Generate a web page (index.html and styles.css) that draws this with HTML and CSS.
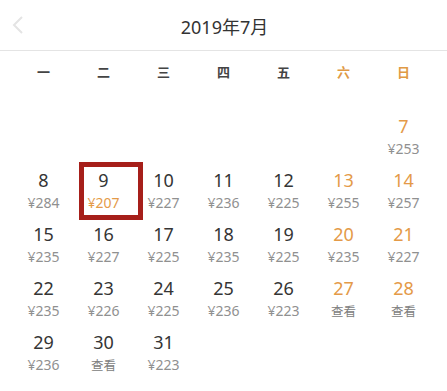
FILE: index.html
```html
<!DOCTYPE html>
<html lang="zh">
<head>
<meta charset="utf-8">
<link rel="stylesheet" href="styles.css">
</head>
<body>
<div class="header">
  <span class="back"><svg width="12" height="18" viewBox="0 0 12 18"><path d="M10 1 L2 9 L10 17" fill="none" stroke="#e4e4e4" stroke-width="2"/></svg></span>
  <span class="title">2019年7月</span>
</div>
<div class="weekdays">
  <span>一</span><span>二</span><span>三</span><span>四</span><span>五</span><span class="we">六</span><span class="we">日</span>
</div>
<div class="grid">
  <div class="cell"></div><div class="cell"></div><div class="cell"></div><div class="cell"></div><div class="cell"></div><div class="cell"></div>
  <div class="cell we"><div class="num">7</div><div class="price">¥253</div></div>

  <div class="cell"><div class="num">8</div><div class="price">¥284</div></div>
  <div class="cell sel"><div class="num">9</div><div class="price">¥207</div><span class="box"></span></div>
  <div class="cell"><div class="num">10</div><div class="price">¥227</div></div>
  <div class="cell"><div class="num">11</div><div class="price">¥236</div></div>
  <div class="cell"><div class="num">12</div><div class="price">¥225</div></div>
  <div class="cell we"><div class="num">13</div><div class="price">¥255</div></div>
  <div class="cell we"><div class="num">14</div><div class="price">¥257</div></div>

  <div class="cell"><div class="num">15</div><div class="price">¥235</div></div>
  <div class="cell"><div class="num">16</div><div class="price">¥227</div></div>
  <div class="cell"><div class="num">17</div><div class="price">¥225</div></div>
  <div class="cell"><div class="num">18</div><div class="price">¥235</div></div>
  <div class="cell"><div class="num">19</div><div class="price">¥225</div></div>
  <div class="cell we"><div class="num">20</div><div class="price">¥235</div></div>
  <div class="cell we"><div class="num">21</div><div class="price">¥227</div></div>

  <div class="cell"><div class="num">22</div><div class="price">¥235</div></div>
  <div class="cell"><div class="num">23</div><div class="price">¥226</div></div>
  <div class="cell"><div class="num">24</div><div class="price">¥225</div></div>
  <div class="cell"><div class="num">25</div><div class="price">¥236</div></div>
  <div class="cell"><div class="num">26</div><div class="price">¥223</div></div>
  <div class="cell we"><div class="num">27</div><div class="price"><span class="look">查看</span></div></div>
  <div class="cell we"><div class="num">28</div><div class="price"><span class="look">查看</span></div></div>

  <div class="cell"><div class="num">29</div><div class="price">¥236</div></div>
  <div class="cell"><div class="num">30</div><div class="price"><span class="look">查看</span></div></div>
  <div class="cell"><div class="num">31</div><div class="price">¥223</div></div>
</div>
</body>
</html>
```
FILE: styles.css
```css
html, body {
  margin: 0;
  padding: 0;
  background: #fff;
}
body {
  width: 447px;
  height: 391px;
  overflow: hidden;
  font-family: "Noto Sans", "Noto Sans CJK SC", sans-serif;
  color: #333;
}
.header {
  position: relative;
  height: 50px;
  display: flex;
  align-items: center;
  justify-content: center;
  border-bottom: 1px solid #e4e4e4;
}
.back {
  position: absolute;
  left: 12px;
  top: 16px;
  display: flex;
}
.title {
  font-size: 18px;
  color: #333;
  padding-top: 1px;
  padding-left: 2px;
}
.weekdays {
  display: grid;
  grid-template-columns: repeat(7, 60px);
  justify-content: center;
  height: 40px;
  align-items: center;
  font-family: "Noto Sans CJK SC", sans-serif;
  font-size: 13px;
  font-weight: 700;
  color: #444;
  text-align: center;
}
.weekdays .we {
  color: #e09a45;
}
.grid {
  margin-top: 16px;
  display: grid;
  grid-template-columns: repeat(7, 60px);
  grid-auto-rows: 54px;
  justify-content: center;
  text-align: center;
}
.cell {
  position: relative;
  padding-top: 7px;
}
.num {
  font-size: 18px;
  line-height: 25px;
  color: #353535;
}
.price {
  font-size: 14px;
  line-height: 19px;
  color: #909090;
}
.look {
  font-size: 12.5px;
  color: #808080;
}
.cell.we .num {
  color: #e49a48;
}
.sel .price {
  color: #e49a48;
}
.box {
  position: absolute;
  left: 5px;
  top: 1px;
  width: 64px;
  height: 58px;
  box-sizing: border-box;
  border: 5px solid #a61f1a;
}
```
